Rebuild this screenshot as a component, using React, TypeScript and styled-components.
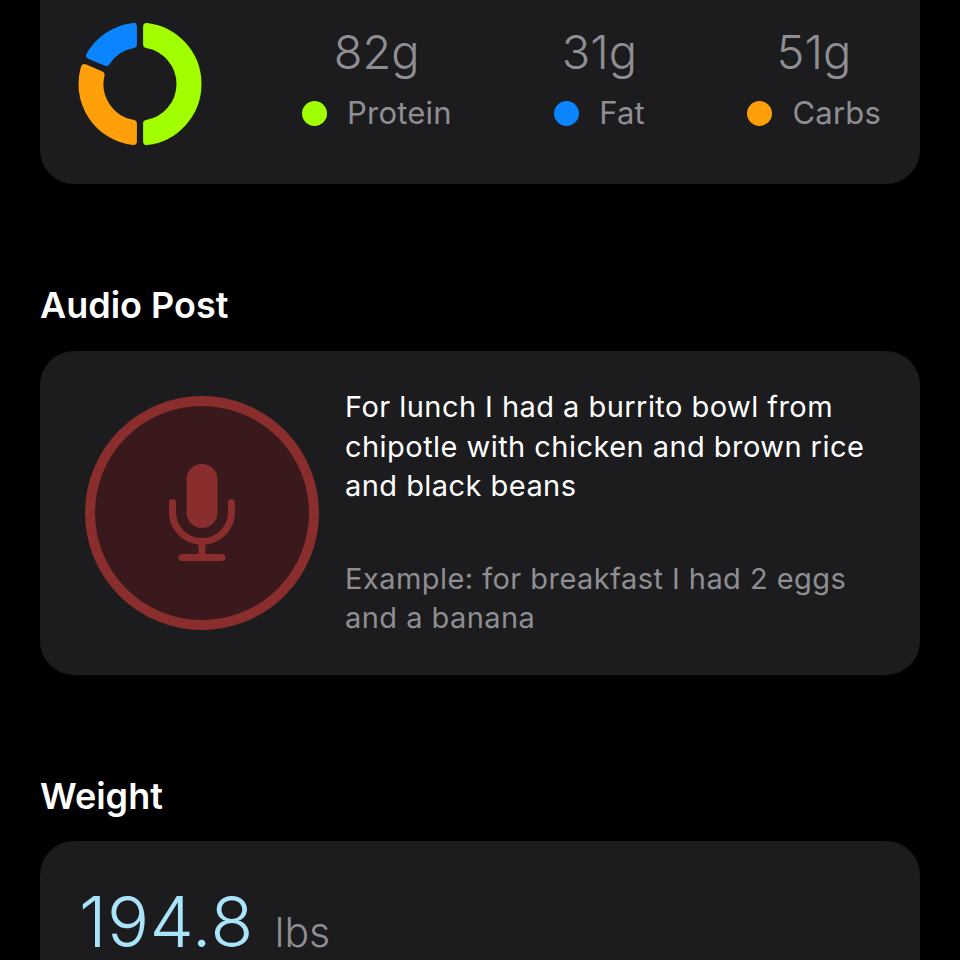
import React from 'react';
import styled, { createGlobalStyle } from 'styled-components';

/* ── Styled Components ── */

const GlobalStyle = createGlobalStyle`
  html, body {
    margin: 0;
    background: #000;
  }
`;

const Screen = styled.div`
  width: 960px;
  height: 960px;
  overflow: hidden;
  background: #000;
  padding: 0 40px;
  box-sizing: border-box;
  font-family: Inter, 'Liberation Sans', sans-serif;
  -webkit-font-smoothing: antialiased;
`;

const Card = styled.div`
  background: #1c1c1e;
  border-radius: 34px;
`;

const MacroCard = styled(Card)`
  height: 224px;
  margin-top: -40px;
  padding: 62px 39px 0 38px;
  box-sizing: border-box;
  display: flex;
  justify-content: space-between;
`;

const Donut = styled.svg`
  width: 124px;
  height: 124px;
  flex-shrink: 0;
`;

const MacroList = styled.div`
  display: flex;
  gap: 102px;
  padding-top: 2px;
`;

const Macro = styled.div`
  display: flex;
  flex-direction: column;
  align-items: center;
`;

const MacroValue = styled.div`
  font-size: 47px;
  font-weight: 300;
  line-height: 56px;
  color: #8e8e93;
`;

const MacroLabelRow = styled.div`
  display: flex;
  align-items: center;
  gap: 20.5px;
  margin-top: 14px;
`;

const Dot = styled.span<{ $color: string }>`
  width: 25px;
  height: 25px;
  border-radius: 50%;
  background: ${({ $color }) => $color};
`;

const MacroLabel = styled.span`
  font-size: 31px;
  letter-spacing: 0.2px;
  line-height: 38px;
  color: #8e8e93;
`;

const SectionTitle = styled.h2<{ $bottom: number }>`
  margin: 99px 0 ${({ $bottom }) => $bottom}px 0;
  font-size: 36px;
  font-weight: 600;
  line-height: 44px;
  color: #fff;
`;

const AudioCard = styled(Card)`
  height: 324px;
  display: flex;
  align-items: flex-start;
  padding: 36px 40px 0 45px;
  box-sizing: border-box;
  gap: 26px;
`;

const RecordButton = styled.div`
  width: 234px;
  height: 234px;
  margin-top: 9px;
  border-radius: 50%;
  border: 10px solid #8a2d2d;
  background: #3a191c;
  box-sizing: border-box;
  display: flex;
  align-items: center;
  justify-content: center;
  flex-shrink: 0;
`;

const MicIcon = styled.svg`
  width: 66px;
  height: 98px;
`;

const AudioText = styled.div`
  display: flex;
  flex-direction: column;
  gap: 53px;
`;

const Transcript = styled.p<{ $muted?: boolean }>`
  margin: 0;
  font-size: 29px;
  letter-spacing: 0.45px;
  line-height: 39.5px;
  color: ${({ $muted }) => ($muted ? '#8e8e93' : '#fff')};
`;

const WeightCard = styled(Card)`
  height: 200px;
  padding: 46px 39px 0;
  box-sizing: border-box;
  display: flex;
  align-items: baseline;
  gap: 21px;
`;

const WeightValue = styled.span`
  font-size: 70px;
  font-weight: 300;
  letter-spacing: 0.5px;
  line-height: 70px;
  color: #a9e4fb;
`;

const WeightUnit = styled.span`
  font-size: 41px;
  font-weight: 300;
  color: #8e8e93;
`;

/* ── Data ── */

const macros = [
  { value: '82g', label: 'Protein', color: '#a2ff00' },
  { value: '31g', label: 'Fat', color: '#0a84ff' },
  { value: '51g', label: 'Carbs', color: '#ff9f0a' },
];

/* Ring segment between two clock angles, kept a fixed distance off each separator */
const CENTER = 62;
const OUTER = 58;
const INNER = 40;
const INSET = 6.6;

const point = (r: number, deg: number) => {
  const rad = (deg * Math.PI) / 180;
  return `${(CENTER + r * Math.sin(rad)).toFixed(2)} ${(CENTER - r * Math.cos(rad)).toFixed(2)}`;
};

const shift = (r: number) => (Math.asin(INSET / r) * 180) / Math.PI;

const segment = (from: number, to: number) => {
  const large = to - from > 180 ? 1 : 0;
  return [
    `M${point(OUTER, from + shift(OUTER))}`,
    `A${OUTER} ${OUTER} 0 ${large} 1 ${point(OUTER, to - shift(OUTER))}`,
    `L${point(INNER, to - shift(INNER))}`,
    `A${INNER} ${INNER} 0 ${large} 0 ${point(INNER, from + shift(INNER))}`,
    'Z',
  ].join(' ');
};

const rings = [
  { from: 0, to: 180, color: '#a2ff00' },
  { from: 180, to: 293, color: '#ff9f0a' },
  { from: 293, to: 360, color: '#0a84ff' },
];

/* ── Component ── */

const App: React.FC = () => (
  <Screen>
    <GlobalStyle />

    <MacroCard>
      <Donut viewBox="0 0 124 124">
        {rings.map((ring) => (
          <path
            key={ring.color}
            d={segment(ring.from, ring.to)}
            fill={ring.color}
            stroke={ring.color}
            strokeWidth={7}
            strokeLinejoin="round"
          />
        ))}
      </Donut>
      <MacroList>
        {macros.map((macro) => (
          <Macro key={macro.label}>
            <MacroValue>{macro.value}</MacroValue>
            <MacroLabelRow>
              <Dot $color={macro.color} />
              <MacroLabel>{macro.label}</MacroLabel>
            </MacroLabelRow>
          </Macro>
        ))}
      </MacroList>
    </MacroCard>

    <SectionTitle $bottom={24}>Audio Post</SectionTitle>
    <AudioCard>
      <RecordButton>
        <MicIcon viewBox="0 0 66 98" fill="none">
          <rect x="17.5" y="0" width="31" height="64" rx="15.5" fill="#8a2d2d" />
          <path
            d="M3.5 38.5V48a29.5 29.5 0 0 0 59 0V38.5M33 78V93"
            stroke="#8a2d2d"
            strokeWidth="7"
            strokeLinecap="round"
          />
          <rect x="9.5" y="90" width="47" height="7" rx="3.5" fill="#8a2d2d" />
        </MicIcon>
      </RecordButton>
      <AudioText>
        <Transcript>
          For lunch I had a burrito bowl from chipotle with chicken and brown rice and black beans
        </Transcript>
        <Transcript $muted>Example: for breakfast I had 2 eggs and a banana</Transcript>
      </AudioText>
    </AudioCard>

    <SectionTitle $bottom={23}>Weight</SectionTitle>
    <WeightCard>
      <WeightValue>194.8</WeightValue>
      <WeightUnit>lbs</WeightUnit>
    </WeightCard>
  </Screen>
);

export default App;
